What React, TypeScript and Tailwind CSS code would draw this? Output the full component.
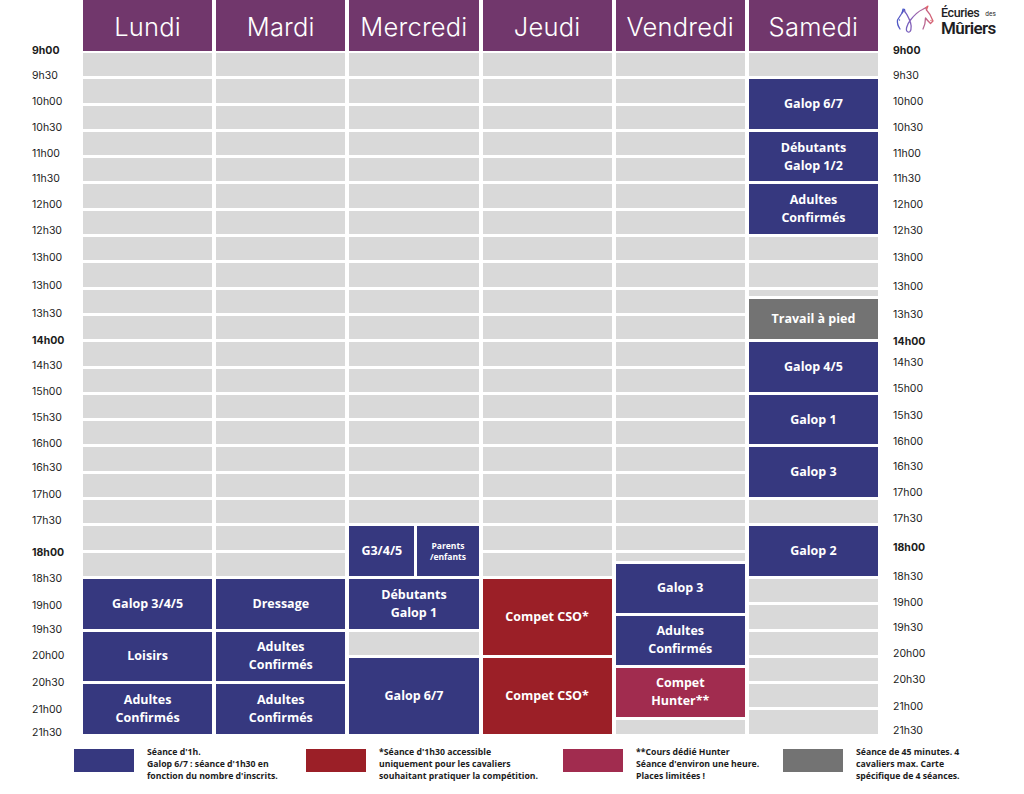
import React from 'react'

type Kind = 'grey' | 'blue' | 'red' | 'hunter' | 'walk'
type Cell = { h: string; kind: Kind; text?: React.ReactNode; split?: boolean }

const bg: Record<Kind, string> = {
  grey: 'bg-[#d9d9d9]',
  blue: 'bg-[#36387f]',
  red: 'bg-[#9b1f27]',
  hunter: 'bg-[#a12c4f]',
  walk: 'bg-[#737373]',
}

const H1 = 'h-[23.3px]'
const H2 = 'h-[49.6px]'
const H3 = 'h-[75.9px]'

const greys = (n: number): Cell[] => Array.from({ length: n }, () => ({ h: H1, kind: 'grey' as Kind }))

const two = (a: string, b: string) => (
  <>
    {a}
    <br />
    {b}
  </>
)

const days: { name: string; cells: Cell[] }[] = [
  {
    name: 'Lundi',
    cells: [
      ...greys(20),
      { h: H2, kind: 'blue', text: 'Galop 3/4/5' },
      { h: H2, kind: 'blue', text: 'Loisirs' },
      { h: H2, kind: 'blue', text: two('Adultes', 'Confirmés') },
    ],
  },
  {
    name: 'Mardi',
    cells: [
      ...greys(20),
      { h: H2, kind: 'blue', text: 'Dressage' },
      { h: H2, kind: 'blue', text: two('Adultes', 'Confirmés') },
      { h: H2, kind: 'blue', text: two('Adultes', 'Confirmés') },
    ],
  },
  {
    name: 'Mercredi',
    cells: [
      ...greys(18),
      { h: H2, kind: 'blue', split: true },
      { h: H2, kind: 'blue', text: two('Débutants', 'Galop 1') },
      { h: H1, kind: 'grey' },
      { h: H3, kind: 'blue', text: 'Galop 6/7' },
    ],
  },
  {
    name: 'Jeudi',
    cells: [
      ...greys(20),
      { h: H3, kind: 'red', text: 'Compet CSO*' },
      { h: H3, kind: 'red', text: 'Compet CSO*' },
    ],
  },
  {
    name: 'Vendredi',
    cells: [
      ...greys(19),
      { h: 'h-[8px]', kind: 'grey' },
      { h: 'h-[49px]', kind: 'blue', text: 'Galop 3' },
      { h: 'h-[49px]', kind: 'blue', text: two('Adultes', 'Confirmés') },
      { h: 'h-[49px]', kind: 'hunter', text: two('Compet', 'Hunter**') },
      { h: 'h-[14.1px]', kind: 'grey' },
    ],
  },
  {
    name: 'Samedi',
    cells: [
      { h: H1, kind: 'grey' },
      { h: H2, kind: 'blue', text: 'Galop 6/7' },
      { h: H2, kind: 'blue', text: two('Débutants', 'Galop 1/2') },
      { h: H2, kind: 'blue', text: two('Adultes', 'Confirmés') },
      { h: H1, kind: 'grey' },
      { h: H1, kind: 'grey' },
      { h: 'h-[6px]', kind: 'grey' },
      { h: 'h-[40.6px]', kind: 'walk', text: 'Travail à pied' },
      { h: H2, kind: 'blue', text: 'Galop 4/5' },
      { h: H2, kind: 'blue', text: 'Galop 1' },
      { h: H2, kind: 'blue', text: 'Galop 3' },
      { h: H1, kind: 'grey' },
      { h: H2, kind: 'blue', text: 'Galop 2' },
      ...greys(6),
    ],
  },
]

type Label = { t: string; b?: boolean; h: string }

const leftLabels: Label[] = [
  { t: '9h00', b: true, h: 'h-[25px]' },
  { t: '9h30', h: 'h-[26px]' },
  { t: '10h00', h: 'h-[26px]' },
  { t: '10h30', h: 'h-[26px]' },
  { t: '11h00', h: 'h-[25px]' },
  { t: '11h30', h: 'h-[26px]' },
  { t: '12h00', h: 'h-[26px]' },
  { t: '12h30', h: 'h-[27px]' },
  { t: '13h00', h: 'h-[28px]' },
  { t: '13h00', h: 'h-[28px]' },
  { t: '13h30', h: 'h-[27px]' },
  { t: '14h00', b: true, h: 'h-[25px]' },
  { t: '14h30', h: 'h-[26px]' },
  { t: '15h00', h: 'h-[26px]' },
  { t: '15h30', h: 'h-[26px]' },
  { t: '16h00', h: 'h-[24px]' },
  { t: '16h30', h: 'h-[27px]' },
  { t: '17h00', h: 'h-[26px]' },
  { t: '17h30', h: 'h-[32px]' },
  { t: '18h00', b: true, h: 'h-[26px]' },
  { t: '18h30', h: 'h-[27px]' },
  { t: '19h00', h: 'h-[24px]' },
  { t: '19h30', h: 'h-[26px]' },
  { t: '20h00', h: 'h-[27px]' },
  { t: '20h30', h: 'h-[27px]' },
  { t: '21h00', h: 'h-[23px]' },
  { t: '21h30', h: 'h-[14px]' },
]

const rightLabels: Label[] = [
  { t: '9h00', b: true, h: 'h-[25px]' },
  { t: '9h30', h: 'h-[26px]' },
  { t: '10h00', h: 'h-[26px]' },
  { t: '10h30', h: 'h-[26px]' },
  { t: '11h00', h: 'h-[25px]' },
  { t: '11h30', h: 'h-[26px]' },
  { t: '12h00', h: 'h-[26px]' },
  { t: '12h30', h: 'h-[27px]' },
  { t: '13h00', h: 'h-[29px]' },
  { t: '13h00', h: 'h-[28px]' },
  { t: '13h30', h: 'h-[27px]' },
  { t: '14h00', b: true, h: 'h-[21px]' },
  { t: '14h30', h: 'h-[26px]' },
  { t: '15h00', h: 'h-[27px]' },
  { t: '15h30', h: 'h-[26px]' },
  { t: '16h00', h: 'h-[25px]' },
  { t: '16h30', h: 'h-[26px]' },
  { t: '17h00', h: 'h-[26px]' },
  { t: '17h30', h: 'h-[29px]' },
  { t: '18h00', b: true, h: 'h-[29px]' },
  { t: '18h30', h: 'h-[26px]' },
  { t: '19h00', h: 'h-[25px]' },
  { t: '19h30', h: 'h-[26px]' },
  { t: '20h00', h: 'h-[26px]' },
  { t: '20h30', h: 'h-[27px]' },
  { t: '21h00', h: 'h-[24px]' },
  { t: '21h30', h: 'h-[14px]' },
]

function Times({ labels }: { labels: Label[] }) {
  return (
    <div className="flex flex-col">
      {labels.map((l, i) => (
        <div key={i} className={`${l.h} shrink-0`}>
          <div
            className={`h-[14px] leading-[14px] text-[10.5px] text-[#1c1c1c] font-['Inter',sans-serif] ${
              l.b ? 'font-bold' : 'font-normal'
            }`}
          >
            {l.t}
          </div>
        </div>
      ))}
    </div>
  )
}

function Logo() {
  return (
    <div className="flex items-start">
      {/* two horse heads drawn as one line, blue to red */}
      <svg width="40" height="30" viewBox="0 0 40 30" fill="none">
        <defs>
          <linearGradient id="horse" x1="0" y1="0" x2="40" y2="0" gradientUnits="userSpaceOnUse">
            <stop offset="0" stopColor="#4657c8" />
            <stop offset="0.45" stopColor="#8d64b8" />
            <stop offset="1" stopColor="#e0636a" />
          </linearGradient>
        </defs>
        <path
          d="M5 25 C3 22 2 19 2.5 16 L7 9 L9.5 5.5 L10 8 C12.5 10.5 14 14.5 15.5 18.5 C17 23.5 16 29 13 28 C10 27 11.5 21 15.5 16 C19 11.5 23 7.5 27.5 5.5 L31 3.5 L31.5 6 C34 8.5 36.5 12.5 38 17 L35.5 19.5 C33.5 17.5 32 16 30.5 14 C30.5 18.5 29.5 22 28 25"
          stroke="url(#horse)"
          strokeWidth="1.3"
          strokeLinecap="round"
          strokeLinejoin="round"
        />
        <path d="M7 9 L8 5 L9.5 5.5" stroke="#4657c8" strokeWidth="1.1" strokeLinecap="round" strokeLinejoin="round" />
        <path d="M31 3.5 L33 2 L31.5 6" stroke="#e0636a" strokeWidth="1.1" strokeLinecap="round" strokeLinejoin="round" />
        <circle cx="4.5" cy="16" r="0.7" fill="#4657c8" />
        <circle cx="36" cy="16.5" r="0.7" fill="#e0636a" />
      </svg>
      <div className="ml-[6px] mt-[2px] font-['Roboto',sans-serif] text-[#1e1e24]">
        <div className="flex items-end h-[14px]">
          <span className="text-[12.5px] leading-[14px] font-medium tracking-[-0.4px]">Écuries</span>
          <span className="text-[6.5px] leading-[8px] ml-[6px] mb-[2px]">des</span>
        </div>
        <div className="text-[17px] leading-[17px] font-semibold tracking-[-0.6px]">Mûriers</div>
      </div>
    </div>
  )
}

function Block({ c }: { c: Cell }) {
  if (c.split) {
    return (
      <div className={`${c.h} shrink-0 flex gap-[3px]`}>
        <div className="w-[65px] bg-[#36387f] flex items-center justify-center text-white font-bold text-[12.5px]">
          G3/4/5
        </div>
        <div className="flex-1 bg-[#36387f] flex items-center justify-center text-center text-white font-bold text-[8.5px] leading-[11px]">
          Parents
          <br />
          /enfants
        </div>
      </div>
    )
  }
  return (
    <div
      className={`${c.h} ${bg[c.kind]} shrink-0 flex items-center justify-center text-center text-white font-bold text-[12.5px] leading-[18px]`}
    >
      {c.text}
    </div>
  )
}

const legend = [
  {
    w: 'w-[232px]',
    color: 'bg-[#36387f]',
    lines: ["Séance d'1h.", "Galop 6/7 : séance d'1h30 en", "fonction du nombre d'inscrits."],
  },
  {
    w: 'w-[257px]',
    color: 'bg-[#9b1f27]',
    lines: ["*Séance d'1h30 accessible", 'uniquement pour les cavaliers', 'souhaitant pratiquer la compétition.'],
  },
  {
    w: 'w-[220px]',
    color: 'bg-[#a12c4f]',
    lines: ['**Cours dédié Hunter', "Séance d'environ une heure.", 'Places limitées !'],
  },
  {
    w: 'w-[200px]',
    color: 'bg-[#737373]',
    lines: ['Séance de 45 minutes. 4', 'cavaliers max. Carte', 'spécifique de 4 séances.'],
  },
]

export default function App() {
  return (
    <div className="w-[1024px] h-[794px] bg-white overflow-hidden flex flex-col font-['Open_Sans',sans-serif]">
      <div className="flex">
        <div className="w-[83px] shrink-0 pl-[32px] pt-[44px]">
          <Times labels={leftLabels} />
        </div>

        <div className="w-[795px] shrink-0 flex gap-[4px]">
          {days.map((d) => (
            <div key={d.name} className="flex-1 min-w-0 flex flex-col">
              <div className="h-[50.7px] bg-[#71376c] flex items-center justify-center pt-[3px] text-white text-[25.5px] font-light font-['Inter',sans-serif] tracking-[0.2px]">
                {d.name}
              </div>
              <div className="mt-[2.3px] flex flex-col gap-[3px]">
                {d.cells.map((c, i) => (
                  <Block key={i} c={c} />
                ))}
              </div>
            </div>
          ))}
        </div>

        <div className="flex-1 flex flex-col">
          <div className="h-[44px] pl-[17px] pt-[4px]">
            <Logo />
          </div>
          <div className="pl-[15px]">
            <Times labels={rightLabels} />
          </div>
        </div>
      </div>

      <div className="mt-[7px] pl-[74px] flex items-start">
        {legend.map((l, i) => (
          <div key={i} className={`${l.w} shrink-0 flex items-start`}>
            <div className={`w-[60px] h-[23px] mt-[2.3px] shrink-0 ${l.color}`} />
            <div className="ml-[13px] text-[8.7px] leading-[11.8px] font-bold text-[#1c1c1c] whitespace-nowrap">
              {l.lines.map((t, j) => (
                <div key={j}>{t}</div>
              ))}
            </div>
          </div>
        ))}
      </div>
    </div>
  )
}
